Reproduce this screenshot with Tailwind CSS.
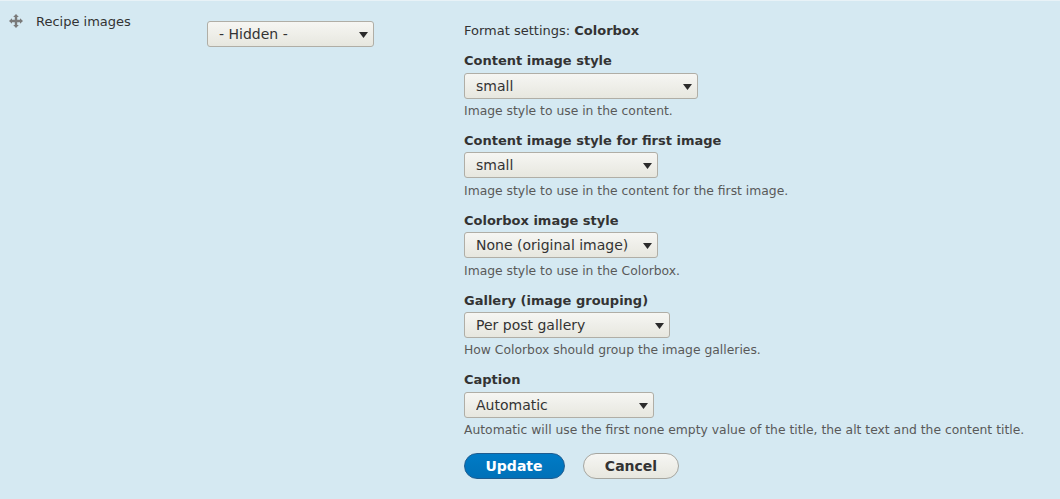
<!DOCTYPE html>
<html><head><meta charset="utf-8"><script src="https://cdn.jsdelivr.net/npm/@tailwindcss/browser@4"></script></head>
<body class="m-0 overflow-hidden">
<div class="w-[1060px] h-[499px] bg-[#d5e9f2] border-t border-[#e8f2f7] text-[#333] font-['DejaVu_Sans',sans-serif] flex">
  <div class="w-[207px] pl-[9px] pt-[13px] flex items-start">
    <svg width="14" height="14" viewBox="0 0 14 14"><path fill="#7a7a7a" d="M7 0 9.800 3H8.200V5.800H11V4.200L14 7l-3 2.800V8.200H8.200V11H9.800L7 14 4.200 11H5.800V8.200H3V9.800L0 7 3 4.200V5.800H5.800V3H4.200Z"/></svg>
    <span class="ml-[13px] text-[13px] leading-[16px]">Recipe images</span>
  </div>
  <div class="w-[257px] pt-[20px]">
    <div class="relative w-[167px] h-[26px]"><select class="appearance-none block w-full h-full pl-[11px] border border-[#b0aea6] rounded-[3px] bg-gradient-to-b from-[#f6f6f3] to-[#e7e7df] text-[14px]"><option>- Hidden -</option></select><svg width="9" height="6" viewBox="0 0 9 6" class="absolute right-[6px] top-[11px]"><path fill="#2b2b2b" d="M0 0h9L4.500 6z"/></svg></div>
  </div>
  <div class="pt-[22px] text-[13px] flex flex-col">
    <div class="leading-[16px]">Format settings: <b>Colorbox</b></div>
    <div class="mt-[14px] font-bold leading-[16px]">Content image style</div>
    <div class="relative mt-[4px] w-[234px] h-[26px]"><select class="appearance-none block w-full h-full pl-[11px] border border-[#b0aea6] rounded-[3px] bg-gradient-to-b from-[#f6f6f3] to-[#e7e7df] text-[14px]"><option>small</option></select><svg width="9" height="6" viewBox="0 0 9 6" class="absolute right-[6px] top-[11px]"><path fill="#2b2b2b" d="M0 0h9L4.500 6z"/></svg></div>
    <div class="mt-[4px] text-[12.35px] leading-[16px] text-[#595959]">Image style to use in the content.</div>
    <div class="mt-[14px] font-bold leading-[16px]">Content image style for first image</div>
    <div class="relative mt-[3px] w-[194px] h-[26px]"><select class="appearance-none block w-full h-full pl-[11px] border border-[#b0aea6] rounded-[3px] bg-gradient-to-b from-[#f6f6f3] to-[#e7e7df] text-[14px]"><option>small</option></select><svg width="9" height="6" viewBox="0 0 9 6" class="absolute right-[6px] top-[11px]"><path fill="#2b2b2b" d="M0 0h9L4.500 6z"/></svg></div>
    <div class="mt-[5px] text-[12.35px] leading-[16px] text-[#595959]">Image style to use in the content for the first image.</div>
    <div class="mt-[14px] font-bold leading-[16px]">Colorbox image style</div>
    <div class="relative mt-[3px] w-[194px] h-[26px]"><select class="appearance-none block w-full h-full pl-[11px] border border-[#b0aea6] rounded-[3px] bg-gradient-to-b from-[#f6f6f3] to-[#e7e7df] text-[14px]"><option>None (original image)</option></select><svg width="9" height="6" viewBox="0 0 9 6" class="absolute right-[6px] top-[11px]"><path fill="#2b2b2b" d="M0 0h9L4.500 6z"/></svg></div>
    <div class="mt-[5px] text-[12.35px] leading-[16px] text-[#595959]">Image style to use in the Colorbox.</div>
    <div class="mt-[14px] font-bold leading-[16px]">Gallery (image grouping)</div>
    <div class="relative mt-[3px] w-[206px] h-[26px]"><select class="appearance-none block w-full h-full pl-[11px] border border-[#b0aea6] rounded-[3px] bg-gradient-to-b from-[#f6f6f3] to-[#e7e7df] text-[14px]"><option>Per post gallery</option></select><svg width="9" height="6" viewBox="0 0 9 6" class="absolute right-[6px] top-[11px]"><path fill="#2b2b2b" d="M0 0h9L4.500 6z"/></svg></div>
    <div class="mt-[4px] text-[12.35px] leading-[16px] text-[#595959]">How Colorbox should group the image galleries.</div>
    <div class="mt-[14px] font-bold leading-[16px]">Caption</div>
    <div class="relative mt-[4px] w-[190px] h-[26px]"><select class="appearance-none block w-full h-full pl-[11px] border border-[#b0aea6] rounded-[3px] bg-gradient-to-b from-[#f6f6f3] to-[#e7e7df] text-[14px]"><option>Automatic</option></select><svg width="9" height="6" viewBox="0 0 9 6" class="absolute right-[6px] top-[11px]"><path fill="#2b2b2b" d="M0 0h9L4.500 6z"/></svg></div>
    <div class="mt-[4px] text-[12.35px] leading-[16px] text-[#595959] whitespace-nowrap">Automatic will use the first none empty value of the title, the alt text and the content title.</div>
    <div class="mt-[15px] flex gap-[18px]">
      <button class="w-[101px] h-[26px] pr-[1px] rounded-[13px] bg-gradient-to-b from-[#007bc6] to-[#0071b8] border border-[#1e5c90] text-white font-bold text-[14px] flex items-center justify-center">Update</button>
      <button class="w-[96px] h-[26px] rounded-[13px] bg-gradient-to-b from-[#f6f6f3] to-[#e7e7df] border border-[#a6a6a0] text-[#333] font-bold text-[14px] flex items-center justify-center">Cancel</button>
    </div>
  </div>
</div>
</body></html>
